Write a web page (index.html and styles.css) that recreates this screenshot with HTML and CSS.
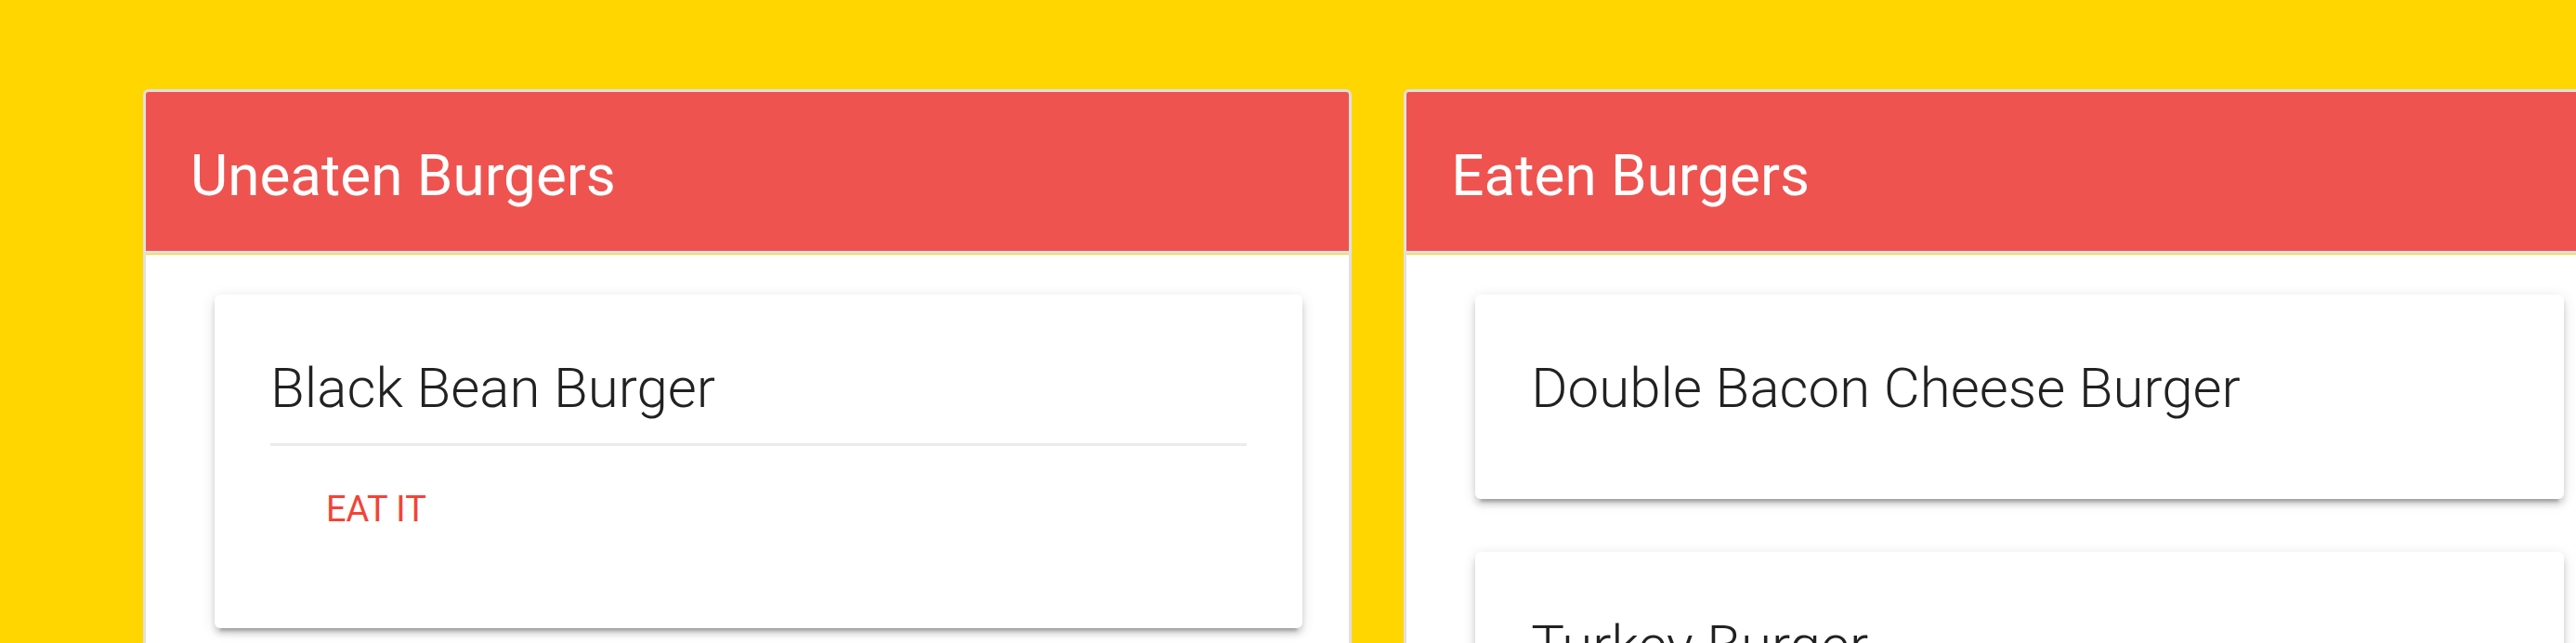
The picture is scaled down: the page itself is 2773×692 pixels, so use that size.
FILE: index.html
```html
<!DOCTYPE html>
<html lang="en">
<head>
<meta charset="utf-8">
<title>Burgers</title>
<link rel="stylesheet" href="styles.css">
</head>
<body>
<main class="board">
  <section class="collection">
    <header class="collection-header"><h1>Uneaten Burgers</h1></header>
    <ul class="burgers">
      <li class="card">
        <h2 class="ruled">Black Bean Burger</h2>
        <form class="actions"><button type="button">EAT IT</button></form>
      </li>
    </ul>
  </section>
  <section class="collection">
    <header class="collection-header"><h1>Eaten Burgers</h1></header>
    <ul class="burgers">
      <li class="card"><h2>Double Bacon Cheese Burger</h2></li>
      <li class="card"><h2>Turkey Burger</h2></li>
    </ul>
  </section>
</main>
</body>
</html>
```
FILE: styles.css
```css
* { box-sizing: border-box; }
html { height: 100%; overflow: hidden; }
body {
  margin: 0;
  min-height: 100%;
  background: #ffd600;
  color: rgba(0, 0, 0, 0.87);
  font-family: Roboto, "Open Sans", sans-serif;
}
.board {
  display: grid;
  grid-template-columns: repeat(2, calc(47vw - 2px));
  gap: 56px;
  padding: 96px 0 0 154px;
}
.collection {
  display: flex;
  flex-direction: column;
  gap: 1px;
  min-height: 100vh;
  border: 3px solid #e0e0e0;
  border-radius: 6px;
  overflow: hidden;
}
.collection-header {
  padding: 52px 48px 43px;
  background: #ef5350;
  border-bottom: 3px solid #e0e0e0;
  color: #fff;
}
h1 { margin: 0; font-size: 62px; line-height: 76px; font-weight: 400; }
.burgers {
  flex: 1;
  display: flex;
  flex-direction: column;
  gap: 57px;
  margin: 0;
  padding: 43px 50px 43px 74px;
  background: #fff;
  list-style: none;
}
.card {
  padding: 60px;
  background: #fff;
  border-radius: 6px;
  box-shadow: 0 6px 6px rgba(0, 0, 0, 0.14), 0 3px 15px rgba(0, 0, 0, 0.12), 0 9px 3px -6px rgba(0, 0, 0, 0.2);
}
h2 { margin: 0; padding-bottom: 18px; font-size: 60px; line-height: 82px; font-weight: 300; }
.ruled { border-bottom: 3px solid #ebebeb; }
.actions { display: flex; padding: 46px 60px; }
button {
  padding: 0;
  border: 0;
  background: none;
  color: #f44336;
  font: 400 38px/44px Roboto, sans-serif;
}
```
